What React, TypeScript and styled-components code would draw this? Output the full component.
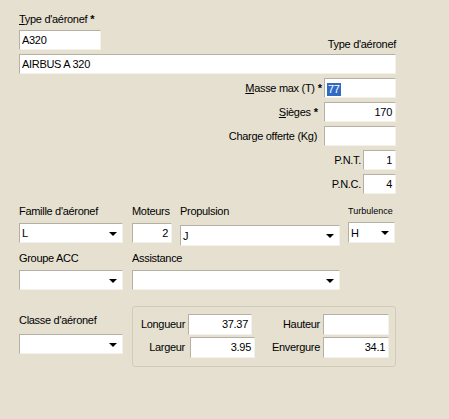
import React from "react";
import styled, { createGlobalStyle } from "styled-components";

const GlobalStyle = createGlobalStyle`
  html, body { margin: 0; padding: 0; background: #E6E0D0; }
  body { font-family: "Liberation Sans", Arial, sans-serif; font-size: 11px; color: #000; }
  * { box-sizing: border-box; }
`;

const Window = styled.div`
  width: 449px;
  height: 419px;
  background: #E6E0D0;
  overflow: hidden;
  padding: 13px 0 0 19px;
`;

const Form = styled.div`
  width: 377px;
  display: flex;
  flex-direction: column;
`;

const Label = styled.span<{ $size?: number; $mr?: number; $mb?: number }>`
  display: block;
  font-size: ${(p) => p.$size ?? 11}px;
  line-height: 13px;
  letter-spacing: ${(p) => (p.$size ? 0 : -0.3)}px;
  white-space: nowrap;
  margin-right: ${(p) => p.$mr ?? 0}px;
  margin-bottom: ${(p) => p.$mb ?? 0}px;
`;

const Star = styled.span`
  font-weight: bold;
  margin-left: 3px;
  letter-spacing: 0;
`;

const Field = styled.div<{ $w: number; $h?: number; $right?: boolean; $mt?: number; $ml?: number }>`
  width: ${(p) => p.$w}px;
  height: ${(p) => p.$h ?? 20}px;
  margin-top: ${(p) => p.$mt ?? 0}px;
  margin-left: ${(p) => p.$ml ?? 0}px;
  background: #fff;
  border: 1px solid;
  border-color: #B4B0A3 #F3F1EA #F3F1EA #B4B0A3;
  line-height: ${(p) => (p.$h ?? 20) - 2}px;
  padding: 0 3px 0 2px;
  text-align: ${(p) => (p.$right ? "right" : "left")};
  letter-spacing: -0.3px;
  white-space: nowrap;
  overflow: hidden;
  flex-shrink: 0;
`;

const Select = styled.div<{ $w: number; $h?: number; $mt?: number }>`
  width: ${(p) => p.$w}px;
  height: ${(p) => p.$h ?? 20}px;
  margin-top: ${(p) => p.$mt ?? 0}px;
  background: #fff;
  border: 1px solid;
  border-color: #B4B0A3 #F3F1EA #F3F1EA #B4B0A3;
  display: flex;
  align-items: center;
  justify-content: space-between;
  padding: 0 5px 0 2px;
  letter-spacing: -0.3px;
  flex-shrink: 0;
`;

const Arrow = styled.span`
  width: 0;
  height: 0;
  border-left: 4px solid transparent;
  border-right: 4px solid transparent;
  border-top: 4px solid #000;
  margin-top: 1px;
`;

const Selected = styled.span`
  display: inline-block;
  background: #316AC5;
  color: #fff;
  line-height: 13px;
  padding: 0 1px;
  vertical-align: middle;
`;

const TopRow = styled.div`
  display: flex;
  justify-content: space-between;
  align-items: flex-end;
  margin-top: 4px;
`;

const RightRows = styled.div`
  display: flex;
  flex-direction: column;
  align-items: flex-end;
  gap: 4px;
  margin-top: 4px;
`;

const RightRow = styled.div`
  display: flex;
  align-items: center;
`;

const FieldRow = styled.div<{ $mt: number }>`
  display: flex;
  align-items: flex-start;
  margin-top: ${(p) => p.$mt}px;
`;

const Column = styled.div<{ $w: number; $gap?: number; $pt?: number }>`
  width: ${(p) => p.$w}px;
  display: flex;
  flex-direction: column;
  gap: ${(p) => p.$gap ?? 5}px;
  padding-top: ${(p) => p.$pt ?? 0}px;
  flex-shrink: 0;
`;

const GroupBox = styled.div`
  width: 264px;
  height: 61px;
  border: 1px solid #D0CBBA;
  border-radius: 3px;
  padding-top: 7px;
  display: flex;
  flex-direction: column;
  gap: 2px;
`;

const GroupRow = styled.div`
  display: flex;
  align-items: center;
`;

const GLabel = styled.span<{ $w: number }>`
  width: ${(p) => p.$w}px;
  text-align: right;
  line-height: 13px;
  letter-spacing: -0.3px;
  white-space: nowrap;
  flex-shrink: 0;
`;

export default function App() {
  return (
    <Window>
      <GlobalStyle />
      <Form>
        <Label>
          <u>T</u>ype d'aéronef<Star>*</Star>
        </Label>
        <TopRow>
          <Field $w={82}>A320</Field>
          <Label $mb={-1}>Type d'aéronef</Label>
        </TopRow>
        <Field $w={377} $mt={4}>AIRBUS A 320</Field>

        <RightRows>
          <RightRow>
            <Label $mr={2}>
              <u>M</u>asse max (T)<Star>*</Star>
            </Label>
            <Field $w={72}>
              <Selected>77</Selected>
            </Field>
          </RightRow>
          <RightRow>
            <Label $mr={6}>
              <u>S</u>ièges<Star>*</Star>
            </Label>
            <Field $w={72} $right>170</Field>
          </RightRow>
          <RightRow>
            <Label $mr={7}>Charge offerte (Kg)</Label>
            <Field $w={72} $right></Field>
          </RightRow>
          <RightRow>
            <Label $mr={2}>P.N.T.</Label>
            <Field $w={33} $right>1</Field>
          </RightRow>
          <RightRow>
            <Label $mr={2}>P.N.C.</Label>
            <Field $w={33} $right>4</Field>
          </RightRow>
        </RightRows>

        <FieldRow $mt={11}>
          <Column $w={113}>
            <Label>Famille d'aéronef</Label>
            <Select $w={104}>
              L<Arrow />
            </Select>
          </Column>
          <Column $w={48}>
            <Label>Moteurs</Label>
            <Field $w={40} $right>2</Field>
          </Column>
          <Column $w={168}>
            <Label>Propulsion</Label>
            <Select $w={160} $h={21} $mt={2}>
              J<Arrow />
            </Select>
          </Column>
          <Column $w={47}>
            <Label $size={9}>Turbulence</Label>
            <Select $w={47} $h={21} $mt={-1}>
              H<Arrow />
            </Select>
          </Column>
        </FieldRow>

        <FieldRow $mt={6}>
          <Column $w={113}>
            <Label>Groupe ACC</Label>
            <Select $w={104}>
              <span />
              <Arrow />
            </Select>
          </Column>
          <Column $w={208}>
            <Label>Assistance</Label>
            <Select $w={208}>
              <span />
              <Arrow />
            </Select>
          </Column>
        </FieldRow>

        <FieldRow $mt={16}>
          <Column $w={113} $pt={8} $gap={7}>
            <Label>Classe d'aéronef</Label>
            <Select $w={104}>
              <span />
              <Arrow />
            </Select>
          </Column>
          <GroupBox>
            <GroupRow>
              <GLabel $w={52}>Longueur</GLabel>
              <Field $w={64} $h={21} $ml={3} $right>37.37</Field>
              <GLabel $w={68}>Hauteur</GLabel>
              <Field $w={66} $h={21} $ml={3} $right></Field>
            </GroupRow>
            <GroupRow>
              <GLabel $w={52}>Largeur</GLabel>
              <Field $w={65} $h={21} $ml={5} $right>3.95</Field>
              <GLabel $w={65}>Envergure</GLabel>
              <Field $w={66} $h={21} $ml={3} $right>34.1</Field>
            </GroupRow>
          </GroupBox>
        </FieldRow>
      </Form>
    </Window>
  );
}
